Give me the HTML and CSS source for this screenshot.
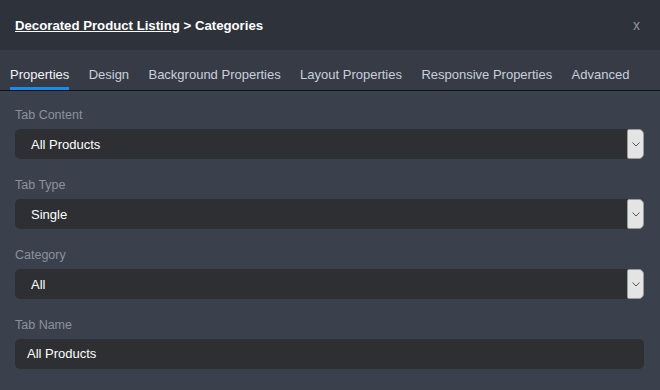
FILE: index.html
```html
<!DOCTYPE html>
<html>
<head>
<meta charset="utf-8">
<link rel="stylesheet" href="styles.css">
</head>
<body>
<div class="panel">
  <div class="header">
    <div class="title"><span class="crumb">Decorated Product Listing</span> &gt; Categories</div>
    <div class="close">x</div>
  </div>
  <div class="tabs">
    <div class="tab active">Properties</div>
    <div class="tab">Design</div>
    <div class="tab">Background Properties</div>
    <div class="tab">Layout Properties</div>
    <div class="tab">Responsive Properties</div>
    <div class="tab">Advanced</div>
  </div>
  <div class="content">
    <div class="field">
      <div class="label">Tab Content</div>
      <div class="select"><span class="value">All Products</span><span class="arrow"><svg width="8" height="5" viewBox="0 0 8 5"><polyline points="0.5,0.5 4,4 7.5,0.5" fill="none" stroke="#555" stroke-width="1"/></svg></span></div>
    </div>
    <div class="field">
      <div class="label">Tab Type</div>
      <div class="select"><span class="value">Single</span><span class="arrow"><svg width="8" height="5" viewBox="0 0 8 5"><polyline points="0.5,0.5 4,4 7.5,0.5" fill="none" stroke="#555" stroke-width="1"/></svg></span></div>
    </div>
    <div class="field">
      <div class="label">Category</div>
      <div class="select"><span class="value">All</span><span class="arrow"><svg width="8" height="5" viewBox="0 0 8 5"><polyline points="0.5,0.5 4,4 7.5,0.5" fill="none" stroke="#555" stroke-width="1"/></svg></span></div>
    </div>
    <div class="field">
      <div class="label">Tab Name</div>
      <div class="input">All Products</div>
    </div>
  </div>
</div>
</body>
</html>
```
FILE: styles.css
```css
html, body {
  margin: 0;
  padding: 0;
}
body {
  background: #3b414c;
  font-family: "Liberation Sans", Arial, sans-serif;
  font-size: 13px;
  width: 660px;
  height: 390px;
  overflow: hidden;
}
.header {
  height: 50px;
  background: #2e323a;
  display: flex;
  align-items: center;
  justify-content: space-between;
  padding: 0 20px 0 15px;
}
.title {
  color: #ffffff;
  font-weight: bold;
  font-size: 13.2px;
}
.crumb {
  text-decoration: underline;
}
.close {
  color: #8f949c;
  font-size: 14px;
}
.tabs {
  height: 40px;
  background: #363b45;
  border-bottom: 1px solid #121316;
  display: flex;
  align-items: flex-end;
}
.tab {
  margin: 0 9.7px;
  padding: 0 0 5px 0;
  font-size: 13px;
  line-height: 15px;
  color: #c9d0dc;
  border-bottom: 3px solid transparent;
}
.tab:first-child {
  margin-left: 10px;
}
.tab.active {
  color: #f2f4f7;
  border-bottom-color: #1c8ae8;
}
.content {
  padding: 16px 16px 0 15px;
}
.field {
  margin-bottom: 18px;
}
.label {
  color: #8a919d;
  font-size: 12.5px;
  line-height: 16px;
  margin-bottom: 6px;
}
.select {
  height: 30px;
  background: #2d2f33;
  border-radius: 5px;
  display: flex;
  align-items: center;
  justify-content: space-between;
  color: #ffffff;
}
.value {
  padding-left: 16px;
}
.arrow {
  width: 15px;
  height: 28px;
  background: #e4e4e4;
  border: 1px solid #9a9a9a;
  border-radius: 2px 5px 5px 2px;
  display: flex;
  align-items: center;
  justify-content: center;
}
.input {
  height: 30px;
  background: #2d2f33;
  border-radius: 5px;
  color: #ffffff;
  line-height: 30px;
  padding-left: 12px;
}
```
